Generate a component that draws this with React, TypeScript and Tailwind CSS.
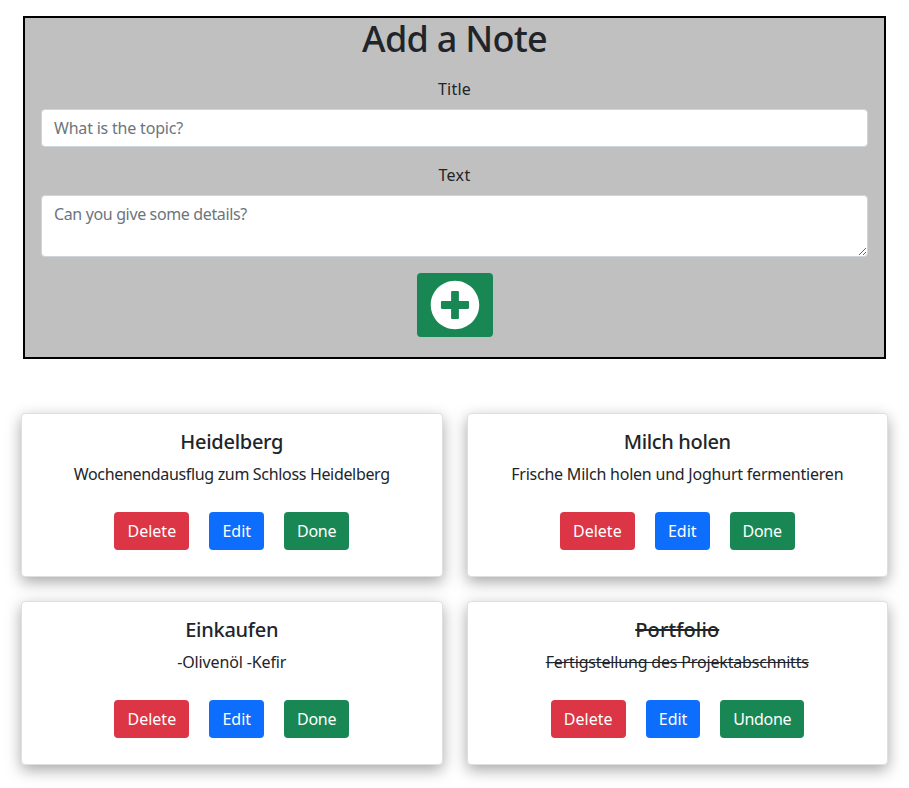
import { clsx } from "clsx";
import { FaPlusCircle } from "react-icons/fa";

type Note = {
  title: string;
  text: string;
  done: boolean;
  titleClass: string;
  textClass: string;
};

const notes: Note[] = [
  {
    title: "Heidelberg",
    text: "Wochenendausflug zum Schloss Heidelberg",
    done: false,
    titleClass: "tracking-[-0.27px]",
    textClass: "tracking-[-0.33px]",
  },
  {
    title: "Milch holen",
    text: "Frische Milch holen und Joghurt fermentieren",
    done: false,
    titleClass: "tracking-[-0.35px]",
    textClass: "tracking-[-0.22px]",
  },
  {
    title: "Einkaufen",
    text: "-Olivenöl -Kefir",
    done: false,
    titleClass: "tracking-[-0.27px]",
    textClass: "tracking-[-0.14px]",
  },
  {
    title: "Portfolio",
    text: "Fertigstellung des Projektabschnitts",
    done: true,
    titleClass: "tracking-[0.12px]",
    textClass: "tracking-[-0.17px]",
  },
];

const button = "h-[38px] rounded text-center text-white";

function NoteForm() {
  return (
    <form className="mx-[23px] h-[343px] border-2 border-black bg-[#c0c0c0] px-4 text-center">
      <h1 className="mb-4 h-[43px] text-[36px] leading-[42px] font-medium tracking-[-0.7px]">
        Add a Note
      </h1>
      <label htmlFor="title" className="mb-2 block tracking-[0.2px]">
        Title
      </label>
      <input
        id="title"
        placeholder="What is the topic?"
        className="mb-4 block h-[38px] w-full rounded border border-[#ced4da] bg-white px-3 tracking-[-0.2px] placeholder:text-[#6c757d]"
      />
      <label htmlFor="text" className="mb-2 block tracking-[0.3px]">
        Text
      </label>
      <textarea
        id="text"
        placeholder="Can you give some details?"
        className="mb-4 block h-[62px] w-full resize-y rounded border border-[#ced4da] bg-white px-3 py-1.5 tracking-[-0.36px] placeholder:text-[#6c757d]"
      />
      <button
        type="button"
        aria-label="Add note"
        className="mx-auto flex h-16 w-[76px] items-center justify-center rounded bg-[#198754] text-white"
      >
        <FaPlusCircle className="size-[50px]" />
      </button>
    </form>
  );
}

function NoteCard({ note }: { note: Note }) {
  return (
    <article className="h-[164px] rounded border border-[#dfdfdf] bg-white p-4 text-center shadow-[0_5px_15px_rgba(0,0,0,0.35)]">
      <h2
        className={clsx(
          "mb-2 text-xl leading-6 font-medium",
          note.titleClass,
          note.done && "line-through",
        )}
      >
        {note.title}
      </h2>
      <p className={clsx(note.textClass, note.done && "line-through")}>{note.text}</p>
      <div className="mt-[26px] flex justify-center gap-5">
        <button className={clsx(button, "w-[75px] bg-[#dc3545]")}>Delete</button>
        <button className={clsx(button, "w-[54.8px] bg-[#0d6efd]")}>Edit</button>
        <button
          className={clsx(
            button,
            "bg-[#198754]",
            note.done ? "w-[83.4px] tracking-[-0.33px]" : "w-[65px] tracking-[-0.3px]",
          )}
        >
          {note.done ? "Undone" : "Done"}
        </button>
      </div>
    </article>
  );
}

export default function App() {
  return (
    <main className="h-[788px] overflow-hidden bg-white pt-4 font-['Noto_Sans',sans-serif] text-base text-[#212529]">
      <NoteForm />
      <section className="mx-[21px] mt-[54px] grid grid-cols-2 gap-6">
        {notes.map((note) => (
          <NoteCard key={note.title} note={note} />
        ))}
      </section>
    </main>
  );
}
